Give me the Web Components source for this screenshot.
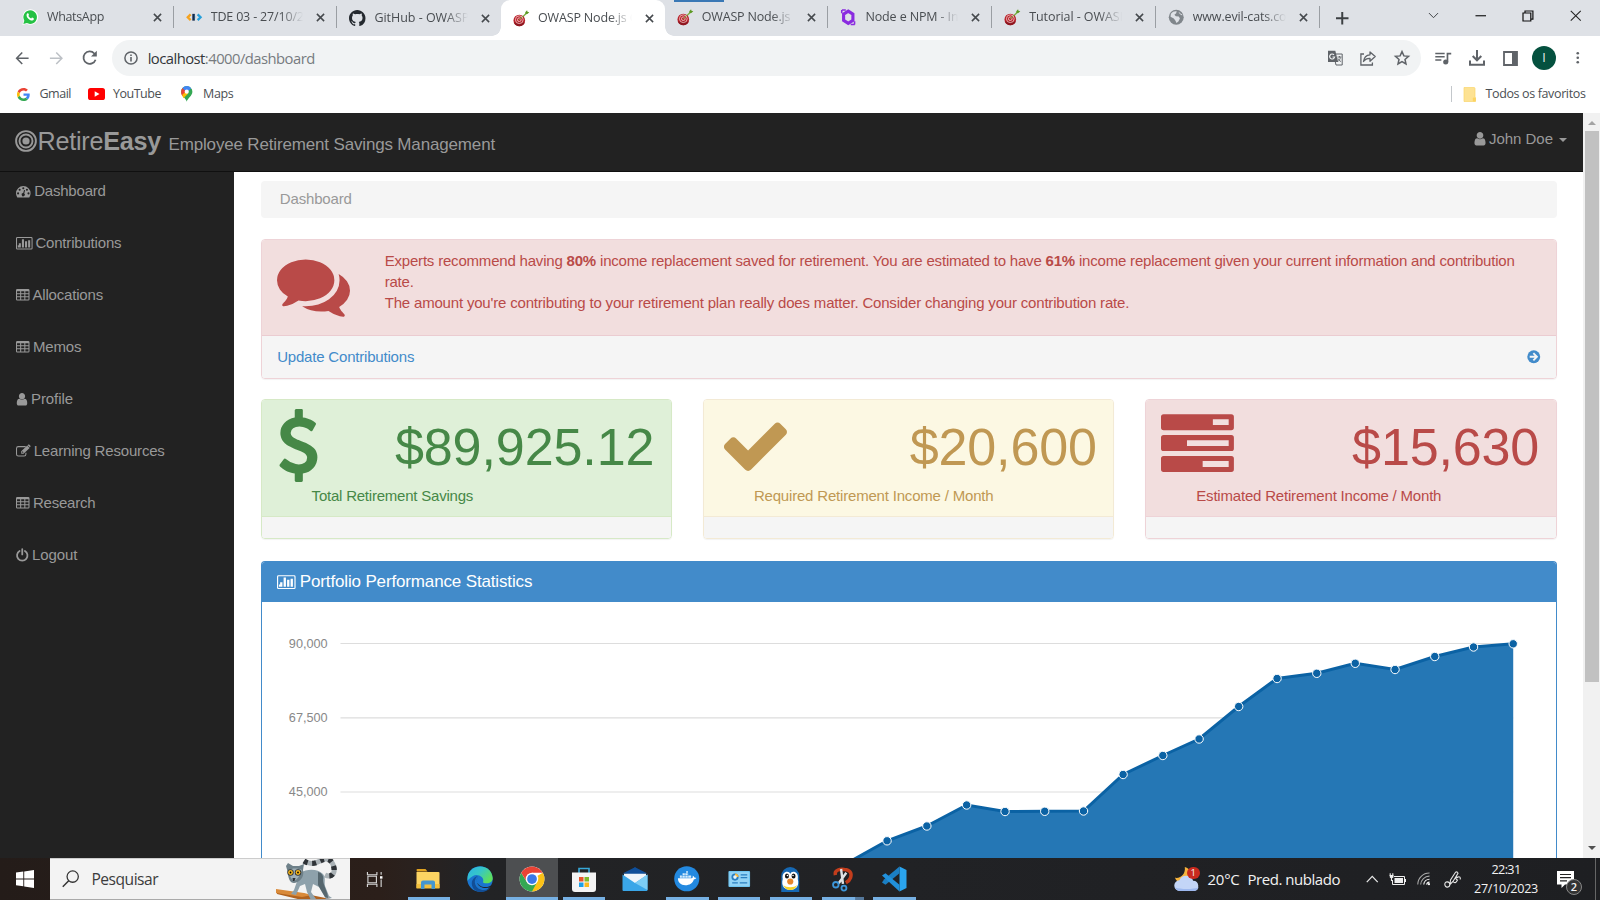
<!DOCTYPE html>
<html lang="pt-BR">
<head>
<meta charset="utf-8">
<title>OWASP Node.js Goat</title>
<style>
html,body{margin:0;height:100%;overflow:hidden;background:#fff}
body{font-family:"Liberation Sans",Arial,sans-serif}
</style>
</head>
<body>
<app-desktop></app-desktop>
<script>
const UI = '"Open Sans","Noto Sans",sans-serif';
const svg = (vb, body, extra = '') => `<svg viewBox="${vb}" ${extra}>${body}</svg>`;
const goat = svg('0 0 17 17', '<path d="M7.500 9.500l6-6" stroke="#7cb342" stroke-width="1.400"/><path d="M12.600 2.300l1.900-2 .4 1.600 1.900.300-2 2-1.900.300z" fill="#5d9a24"/><circle cx="6.500" cy="10.800" r="6" fill="#b7222b"/><path d="M.9 13a6 6 0 0 0 11.200 0z" fill="#8f1720"/><circle cx="6.500" cy="10" r="4" fill="none" stroke="#f0bcbc" stroke-width=".9"/><circle cx="6.500" cy="10" r="1.900" fill="none" stroke="#f3c9c9" stroke-width=".9"/><path d="M6.500 10l3.500-3.500" stroke="#7cb342" stroke-width="1"/>');
const chromeLogo = svg('0 0 48 48', '<circle cx="24" cy="24" r="23" fill="#fff"/><path d="M24 24L43.900 12.500A23 23 0 0 1 24 47z" fill="#fbc116"/><path d="M4.100 12.500A23 23 0 0 0 24 47L33.500 29.500 24 24 14.500 29.500z" fill="#34a853"/><path d="M4.100 12.500A23 23 0 0 1 43.900 12.500H24L14.500 29.500z" fill="#ea4335"/><circle cx="24" cy="24" r="11.500" fill="#fff"/><circle cx="24" cy="24" r="9" fill="#3b78e7"/>');
const I = {
 whatsapp: svg('0 0 17 17','<path d="M.4 16.500L1.700 12.200A8 8 0 1 1 4.800 15.300z" fill="#fff"/><path d="M1.400 15.500l1-3.500a7 7 0 1 1 2.600 2.500z" fill="#25c144"/><path d="M5.700 4.500c.6-.4 1 0 1.500 1.500.1.500-.5.800-.6 1.200.7 1.300 1.600 2 2.800 2.500.5-.2.800-1 1.200-.9l1.600.9c.3.500-.3 2-1.700 2.100C7.900 12 4.800 8.800 4.700 6.600c0-1 .4-1.800 1-2.100z" fill="#fff"/>'),
 tde: svg('0 0 17 17','<path d="M4.800 5.500L1.800 8.500l3 3" fill="none" stroke="#f5a31f" stroke-width="2.400"/><path d="M7.800 5v7" stroke="#142a4c" stroke-width="2.600"/><path d="M9.100 5.300v6.400q1-3.200 0-6.400z" fill="#26a0da"/><path d="M12 5.500l3 3-3 3" fill="none" stroke="#26a0da" stroke-width="2.400"/>'),
 github: svg('0 0 16 16','<path fill="#24292f" d="M8 0C3.580 0 0 3.580 0 8c0 3.540 2.290 6.530 5.470 7.590.4.070.550-.170.550-.380 0-.190-.010-.820-.010-1.490-2.010.370-2.530-.490-2.690-.940-.090-.230-.480-.940-.820-1.130-.280-.150-.680-.520-.010-.530.630-.010 1.080.580 1.230.820.720 1.210 1.870.870 2.330.660.070-.520.280-.870.510-1.070-1.780-.2-3.640-.890-3.640-3.950 0-.870.310-1.590.820-2.150-.080-.2-.360-1.020.080-2.120 0 0 .670-.210 2.200.820.640-.180 1.320-.270 2-.270s1.360.090 2 .270c1.530-1.040 2.200-.820 2.200-.820.440 1.100.160 1.920.080 2.120.510.560.820 1.270.820 2.150 0 3.070-1.870 3.750-3.650 3.950.290.250.540.730.540 1.480 0 1.070-.010 1.930-.010 2.200 0 .210.150.460.550.380A8 8 0 0 0 16 8c0-4.420-3.580-8-8-8z"/>'),
 goat,
 node: svg('0 0 17 17','<path d="M8.500 2.200l4.800 3.100v6.400l-4.800 3.100-4.800-3.100V5.300z" fill="none" stroke="#8a2be0" stroke-width="3.200"/><path d="M2 1h4M1.800 1v3.500M11 16h4.200M15 12.500V16" stroke="#8a2be0" stroke-width="1.600"/>'),
 globe: svg('0 0 17 17','<circle cx="8.500" cy="8.500" r="7.700" fill="#80868b"/><path d="M3 5c1.500-2.300 4-3 6-2.600l-.6 2L6.600 6l1.500 1.500 3 .2 1.200 2.100-1.600 3-2 1.700-1-2.500L6 9.700 2.600 8z" fill="#dee1e6"/><path d="M11.500 3.500l1.500 2 1.700.5" stroke="#dee1e6" fill="none"/>'),
 close: svg('0 0 10 10','<path d="M1 1l8 8M9 1L1 9" stroke="#45494d" stroke-width="1.700"/>'),
 plus: svg('0 0 12 12','<path d="M6 0v12M0 6h12" stroke="#3c4043" stroke-width="1.900"/>'),
 chev: svg('0 0 12 8','<path d="M.8 1.200L6 6.500l5.200-5.300" fill="none" stroke="#3c4043" stroke-width="1.100"/>'),
 min: svg('0 0 12 12','<path d="M.5 6h11" stroke="#111" stroke-width="1.200"/>'),
 restore: svg('0 0 12 12','<path d="M1 3h7.800v8H1zM3 3V1h7.900v8.200H8.800" fill="none" stroke="#111" stroke-width="1.200"/>'),
 winx: svg('0 0 12 12','<path d="M.8.8l10.400 10.400M11.200.8L.8 11.200" stroke="#222" stroke-width="1.100"/>'),
 back: svg('0 0 16 16','<path d="M15 8H2M8 1.700L1.800 8 8 14.300" fill="none" stroke="#5f6368" stroke-width="1.700"/>'),
 fwd: svg('0 0 16 16','<path d="M1 8h13M8 1.700L14.200 8 8 14.300" fill="none" stroke="#bdc1c6" stroke-width="1.700"/>'),
 reload: svg('0 0 16 16','<path d="M14 10A6.400 6.400 0 1 1 12.700 3.600L14 5" fill="none" stroke="#5f6368" stroke-width="1.800"/><path d="M15.300.8v6H9.300z" fill="#5f6368"/>'),
 info: svg('0 0 14 14','<circle cx="7" cy="7" r="6.100" fill="none" stroke="#5f6368" stroke-width="1.500"/><path d="M7 6v4.500M7 3.500v1.600" stroke="#5f6368" stroke-width="1.600"/>'),
 translate: svg('0 0 16 16','<path d="M6.500 4h8.700v11H9z" fill="#f1f3f4" stroke="#5f6368" stroke-width="1"/><path d="M1 .8h7.300L11.200 12H1z" fill="#5f6368"/><path d="M7 4.800A2.500 2.500 0 1 0 7.600 7H5.500" fill="none" stroke="#f1f3f4" stroke-width="1.200"/><path d="M10.500 7h4M12.500 6v1.500M13.500 7.500c-.5 2-1.500 3-2.500 4M11 8.500c.6 1.500 1.600 2.500 3 3" stroke="#5f6368" stroke-width=".9" fill="none"/>'),
 share: svg('0 0 16 16','<path d="M4 4H.9v11h11.500V12.500" fill="none" stroke="#5f6368" stroke-width="1.300"/><path d="M3.500 11.500C4 7.500 6 5 10 4.800V1.900l5.200 4.700-5.200 4.600V8.300C7 8.200 5 9.300 3.500 11.500z" fill="none" stroke="#5f6368" stroke-width="1.300" stroke-linejoin="round"/>'),
 star: svg('0 0 16 16','<path d="M8 1.600l1.900 4.300 4.600.4-3.500 3.100 1 4.600-4-2.400-4 2.400 1-4.600L1.500 6.300l4.600-.4z" fill="none" stroke="#5f6368" stroke-width="1.500"/>'),
 music: svg('0 0 17 16','<path d="M0 2.600h10M0 6.100h10M0 9.600h6.500" stroke="#5f6368" stroke-width="1.700"/><path d="M13 12V2.800h4" stroke="#5f6368" stroke-width="1.800" fill="none"/><circle cx="11.100" cy="11.800" r="2.700" fill="#5f6368"/>'),
 download: svg('0 0 16 16','<path d="M8 0v10M3.700 6L8 10.300 12.300 6M1 10.500v4.300h14v-4.300" fill="none" stroke="#5f6368" stroke-width="2"/>'),
 panel: svg('0 0 15 15','<path d="M1 1h13v13H1z" fill="none" stroke="#5f6368" stroke-width="1.800"/><path d="M9 1h5v13H9z" fill="#5f6368"/>'),
 dots: svg('0 0 4 14','<circle cx="2" cy="1.800" r="1.500" fill="#5f6368"/><circle cx="2" cy="7" r="1.500" fill="#5f6368"/><circle cx="2" cy="12.200" r="1.500" fill="#5f6368"/>'),
 google: svg('0 0 48 48','<path fill="#EA4335" d="M24 9.500c3.540 0 6.710 1.220 9.210 3.600l6.850-6.850C35.900 2.380 30.470 0 24 0 14.620 0 6.510 5.380 2.560 13.220l7.980 6.190C12.430 13.720 17.740 9.500 24 9.500z"/><path fill="#4285F4" d="M46.980 24.550c0-1.570-.150-3.090-.380-4.550H24v9.020h12.940c-.580 2.960-2.260 5.480-4.780 7.180l7.730 6c4.510-4.180 7.090-10.360 7.090-17.650z"/><path fill="#FBBC05" d="M10.530 28.590c-.480-1.450-.760-2.990-.760-4.590s.270-3.140.760-4.590l-7.980-6.190C.920 16.460 0 20.120 0 24c0 3.880.920 7.540 2.560 10.780l7.970-6.190z"/><path fill="#34A853" d="M24 48c6.480 0 11.930-2.130 15.890-5.810l-7.730-6c-2.150 1.450-4.920 2.300-8.160 2.300-6.260 0-11.570-4.220-13.470-9.910l-7.980 6.190C6.510 42.620 14.620 48 24 48z"/>'),
 youtube: svg('0 0 17 12','<rect width="17" height="12" rx="2.600" fill="#f00"/><path d="M6.700 3.300L11.500 6 6.700 8.700z" fill="#fff"/>'),
 maps: svg('0 0 12 17','<path d="M6 16.800C5.500 13 0 10.500 0 6a6 6 0 0 1 12 0c0 4.500-5.500 7-6 10.800z" fill="#34a853"/><path d="M1.500 2.100L6 6l-4.700 5A8 8 0 0 1 0 6a6 6 0 0 1 1.500-3.900z" fill="#ea4335"/><path d="M1 9.500L6 5l1.500 3-5 5z" fill="#fbbc04"/><path d="M1.500 2.100A6 6 0 0 1 10.700 2.300L6 7z" fill="#4285f4"/><circle cx="6" cy="6" r="2.200" fill="#fff"/>'),
 folder: svg('0 0 13 15','<path d="M1 .5h10a1 1 0 0 1 1 1v8.500l.5.700v3.800H1z" fill="#fde293" stroke="#f9d66b" stroke-width=".7"/><rect x="9.800" y="10.500" width="3" height="4" rx="1" fill="#fcd462"/>'),
 bullseye: svg('0 0 22 22','<g fill="none" stroke="#999"><circle cx="11" cy="11" r="9.900" stroke-width="1.900"/><circle cx="11" cy="11" r="6.500" stroke-width="1.900"/></g><circle cx="11" cy="11" r="3.600" fill="#999"/>'),
 dash: svg('0 0 1792 1792','<path fill="currentColor" fill-rule="evenodd" d="M0 1150a896 896 0 0 1 1792 0q0 260-140 480-20 30-54 30H194q-34 0-54-30Q0 1410 0 1150zM256 1024a128 128 0 1 0 0 256 128 128 0 1 0 0-256zM448 576a128 128 0 1 0 0 256 128 128 0 1 0 0-256zM896 384a128 128 0 1 0 0 256 128 128 0 1 0 0-256zM1344 576a128 128 0 1 0 0 256 128 128 0 1 0 0-256zM1536 1024a128 128 0 1 0 0 256 128 128 0 1 0 0-256zM990 740l-100 380a192 192 0 1 0 120 40l105-385z"/>'),
 chart: svg('0 0 2048 1792','<path fill="currentColor" d="M640 896v512H384V896zm384-512v1024H768V384zm384 256v768h-256V640zm384-128v896h-256V512zM384 1150v258H256v-258z" transform="translate(-40 0)"/><rect x="64" y="192" width="1920" height="1408" rx="100" fill="none" stroke="currentColor" stroke-width="128"/>'),
 table: svg('0 0 1664 1792','<path fill="currentColor" fill-rule="evenodd" d="M160 128h1344a160 160 0 0 1 160 160v1088a160 160 0 0 1-160 160H160A160 160 0 0 1 0 1376V288A160 160 0 0 1 160 128zM128 384v256h384V384zM640 384v256h384V384zM1152 384v256h384V384zM128 768v256h384V768zM640 768v256h384V768zM1152 768v256h384V768zM128 1152v256h384v-256zM640 1152v256h384v-256zM1152 1152v256h384v-256z"/>'),
 user: svg('256 0 1280 1792','<path fill="currentColor" d="M1536 1399q0 109-62.500 187t-150.500 78h-854q-88 0-150.500-78t-62.500-187q0-85 8.500-160.500t31.500-152 58.500-131 94-89 134.500-34.500q131 128 313 128t313-128q76 0 134.500 34.500t94 89 58.500 131 31.500 152 8.500 160.500zm-256-887q0 159-112.500 271.500t-271.500 112.500-271.500-112.500-112.500-271.500 112.500-271.500 271.500-112.500 271.500 112.500 112.500 271.500z"/>'),
 edit: svg('0 0 1792 1792','<path fill="none" stroke="currentColor" stroke-width="128" d="M1190 320H290Q64 320 64 546v700q0 226 226 226h700q226 0 226-226v-170"/><path fill="currentColor" fill-rule="evenodd" d="M640 896l740-700 290 290-740 700H640zM760 950v110h100l60-60-110-110zM1510 70q50-40 100 0l160 160q40 50 0 100l-80 80-260-260z"/>'),
 power: svg('0 0 1536 1792','<path fill="none" stroke="currentColor" stroke-width="220" stroke-linecap="round" d="M440 370A640 640 0 1 0 1096 370M768 150v640"/>'),
 comments: svg('0 0 1792 1792','<path fill="currentColor" d="M1408 768q0 139-94 257t-256.500 186.500-353.500 68.500q-86 0-176-16-124 88-278 128-36 9-86 16h-3q-11 0-20.500-8t-11.500-21q-1-3-1-6.500t.5-6.500 2-6l2.500-5 3.500-5.500 4-5 4.500-5 4-4.500q5-6 23-25t26-29.500 22.500-29 25-38.500 20.500-44q-124-72-195-177t-71-224q0-139 94-257t256.500-186.500 353.500-68.500 353.500 68.500 256.500 186.500 94 257zm384 256q0 120-71 224.500t-195 176.500q10 24 20.500 44t25 38.500 22.500 29 26 29.500 23 25q1 1 4 4.500t4.500 5 4 5 3.500 5.500l2.500 5 2 6 .5 6.500-1 6.500q-3 14-13 22t-22 7q-50-7-86-16-154-40-278-128-90 16-176 16-271 0-472-132 58 4 88 4 161 0 309-45t264-129q125-92 192-212t67-254q0-77-23-152 129 71 204 178t75 230z"/>'),
 dollar: svg('0 0 1792 1792','<path fill="currentColor" d="M1362 1185q0 153-99.500 263.500t-258.500 136.500v175q0 14-9 23t-23 9h-135q-13 0-22.500-9.500t-9.500-22.500v-175q-66-9-127.500-31t-101.500-44.500-74-48-46.500-37.500-17.500-18q-17-21-2-41l103-135q7-10 23-12 15-2 24 9l2 2q113 99 243 125 37 8 74 8 81 0 142.500-43t61.500-122q0-28-15-53t-33.500-42-58.500-37.500-66-32-80-32.500q-39-16-61.500-25t-61.500-26.500-62.500-31-56.500-35.500-53.500-42.500-43.500-49-35.500-58-21-66.500-8.500-78q0-138 98-242t255-134v-180q0-13 9.500-22.500t22.500-9.500h135q14 0 23 9t9 23v176q57 6 110.500 23t87 33.500 63.500 37.500 39 29 15 14q17 18 5 38l-81 146q-8 15-23 16-14 3-27-7-3-3-14.500-12t-39-26.500-58.500-32-74.500-26-85.500-11.500q-95 0-155 43t-60 111q0 26 8.500 48t29.500 41.500 39.500 33 56 31 60.500 27 70 27.500q53 20 81 31.500t76 35 75.500 42.500 62 50 53 63.500 31.500 76.500 13 94z"/>'),
 check: svg('0 0 1792 1792','<path fill="currentColor" d="M1671 566q0 40-28 68l-724 724-136 136q-28 28-68 28t-68-28l-136-136-362-362q-28-28-28-68t28-68l136-136q28-28 68-28t68 28l294 295 656-657q28-28 68-28t68 28l136 136q28 28 28 68z"/>'),
 tasks: svg('0 0 1792 1792','<path fill="currentColor" fill-rule="evenodd" d="M64 128h1664a64 64 0 0 1 64 64v264a64 64 0 0 1-64 64H64A64 64 0 0 1 0 456V192a64 64 0 0 1 64-64zM1275 252v142h389V252zM64 642h1664a64 64 0 0 1 64 64v264a64 64 0 0 1-64 64H64a64 64 0 0 1-64-64V706a64 64 0 0 1 64-64zM640 767v142h1024V767zM64 1156h1664a64 64 0 0 1 64 64v264a64 64 0 0 1-64 64H64a64 64 0 0 1-64-64v-264a64 64 0 0 1 64-64zM1024 1281v142h640v-142z"/>'),
 circright: svg('0 0 14 14','<circle cx="7" cy="7" r="6.700" fill="#428bca"/><path d="M2.800 7h7M6.600 3.300L10.300 7l-3.700 3.700" fill="none" stroke="#f5f5f5" stroke-width="1.900"/>'),
 caret: svg('0 0 8 4','<path d="M0 0h8L4 4z" fill="#999"/>'),
 win: svg('0 0 18 18','<path d="M0 2.600l7.300-1v6.900H0zM8.200 1.500L18 0v8.500H8.200zM0 9.400h7.300v6.900L0 15.300zM8.200 9.400H18V18l-9.800-1.500z" fill="#fff"/>'),
 mag: svg('0 0 18 18','<circle cx="11" cy="6.800" r="5.800" fill="none" stroke="#333" stroke-width="1.300"/><path d="M6.900 11L.8 17.200" stroke="#333" stroke-width="1.500"/>'),
 lemur: svg('0 0 64 42','<path d="M28 3C36 8 42 4 46 2c7-3 11 2 12 8s-3 10-9 7" fill="none" stroke="#aab2b6" stroke-width="5"/><path d="M28 3C36 8 42 4 46 2c7-3 11 2 12 8s-3 10-9 7" fill="none" stroke="#2e3236" stroke-width="5.300" stroke-dasharray="4 4.500"/><path d="M0 32l30 4 34 7H30L1 36z" fill="#b0621f"/><path d="M0 31l28 4 8 2-10 2L0 35z" fill="#d98a3a"/><path d="M24 15c8-5 18-4 23 1 3 4 1 8 2 12l4 10 3 2-6 1-7-12-6-3-2 8 5 7-5 1-4-8-2-8-5 2-4 9-5-1 3-4z" fill="#8ea1ab"/><path d="M42 14c4 1 6 4 5 8 0 5 5 12 5 18l-3-1-7-12z" fill="#56676f"/><path d="M10 8l2-3 5 3h6l5-2-1 6c2 8-5 13-9 13s-6-5-6-10z" fill="#6e8089"/><path d="M13 12c3-2 9-2 13 0-2 5-4 9-8 11-3-2-5-6-5-11z" fill="#9fb0b8"/><circle cx="14.500" cy="14.500" r="3.200" fill="#2e3236"/><circle cx="22" cy="14.500" r="3.200" fill="#2e3236"/><circle cx="14.500" cy="14.500" r="2.400" fill="#f7b71c"/><circle cx="22" cy="14.500" r="2.400" fill="#f7b71c"/><circle cx="14.500" cy="14.500" r=".9"/><circle cx="22" cy="14.500" r=".9"/><path d="M16.500 20h3l-1 3h-1.500z" fill="#2e3236"/>'),
 taskview: svg('0 0 18 18','<path d="M1 1v3h10V1M1 17v-3h10v3M1.500 5.500h9v7h-9zM15.500 1v3M15.500 9v8" fill="none" stroke="#d5d5d5" stroke-width="1.200"/><path d="M14.300 5.500h2.600v2.600h-2.600z" fill="#fff"/>'),
 explorer: svg('0 0 24 22','<path d="M.5 2a1 1 0 0 1 1-1h8l2 2.500H1z" fill="#e0a220"/><path d="M.5 4h22a1 1 0 0 1 1 1v15H.5z" fill="#fcd462"/><path d="M.5 16h23v4.500H.5z" fill="#f4c03c"/><path d="M5 21v-6.500q0-2 2-2h10q2 0 2 2V21h-3.500v-4.500h-7V21z" fill="#4496cf"/>'),
 edge: svg('0 0 26 26','<defs><linearGradient id="a" x1="0" y1="0" x2="1" y2=".6"><stop offset="0" stop-color="#2bb3e6"/><stop offset=".5" stop-color="#36c6c8"/><stop offset="1" stop-color="#5fe05a"/></linearGradient></defs><circle cx="13" cy="13" r="12.700" fill="#1a75cf"/><path d="M.6 11C2-2 24-4 25.700 12c.3 5-5.700 6.500-9.700 4.500 2-6-6-9-10-6.500C2.500 12 1 14 .4 15z" fill="url(#a)"/><path d="M11 10c-6 4-3 14 6 14 3 0 5-1 7-3-5 7-15 6-18 1-3-6 0-11 5-12z" fill="#124e96"/><path d="M11 10.500c-2 3-1.500 8 3.500 10 4 1.300 8 .5 10.500-2l-1.200 2.500c-5 2-12 1-13.500-4-.8-3-.5-5 .7-6.500z" fill="#222326"/>'),
 chrome: chromeLogo,
 store: svg('0 0 24 25','<path d="M7 6V1.500h10V6" fill="none" stroke="#37a8d8" stroke-width="1.600"/><path d="M0 5.500h24V22a3 3 0 0 1-3 3H3a3 3 0 0 1-3-3z" fill="#f4f4f4"/><path d="M7 10h4.500v4.500H7z" fill="#e8532a"/><path d="M12.500 10H17v4.500h-4.500z" fill="#7fb92b"/><path d="M7 15.500h4.500V20H7z" fill="#1ba0e8"/><path d="M12.500 15.500H17V20h-4.500z" fill="#fbb91c"/>'),
 mail: svg('0 0 26 24','<path d="M.5 9.500L13 .3l12.500 9.200-12.500 7z" fill="#0f4f9a"/><path d="M2 6.500h22v4L13 18 2 10.500z" fill="#eef5fb" /><path d="M.5 6.500L13 .3l12.500 6.200z" fill="#0f4f9a"/><path d="M.5 7.500L13 16l12.500-8.500V23a1 1 0 0 1-1 1h-23a1 1 0 0 1-1-1z" fill="#3aa6e8"/><path d="M13 16l12.500-8.500V23z" fill="#7ccdf5"/>'),
 docker: svg('0 0 26 26','<circle cx="13" cy="13" r="12.800" fill="#2389e0"/><path d="M4 12.500h14c1 0 1.500-1 1-2.600 1 .3 1.600 1 1.800 1.700 1 0 1.700.2 2 .6-.6 1-1.600 1.200-2.500 1.200C19 17.500 16 19.500 11.500 19.500 7 19.500 4 17 4 12.500z" fill="#fff"/><path d="M6 9.700h11.500v2.200H6zM8.500 7.300h6v2h-6zM12.300 5.300h2v1.700h-2z" fill="#d7ecfb"/><path d="M8.400 7v5M11.300 7v5M14.200 7v5" stroke="#2389e0" stroke-width=".5"/>'),
 card: svg('0 0 23 17','<rect width="23" height="17" rx="1" fill="#6fc6f2"/><rect x="1.200" y="1.200" width="20.600" height="14.600" fill="#93d3f5"/><circle cx="7" cy="6.500" r="3.800" fill="#2a7fc0"/><path d="M7 6.500V2.700a3.800 3.800 0 0 1 3.800 3.800z" fill="#f4b63c"/><circle cx="7" cy="6.500" r="1.900" fill="#e7f5fc"/><path d="M13 4h7M13 7h7M4 12.500h6M12 12.500h8" stroke="#2a7fc0" stroke-width="1.300"/>'),
 penguin: svg('0 0 18 25','<path d="M0 25V9a9 9 0 0 1 18 0v16z" fill="#1668b3"/><path d="M1.500 12C0 4 8 3 9 7c1-4 9-3 7.500 5 2 7-2 11-7.500 11s-9.500-4-7.500-11z" fill="#fff"/><path d="M2 18c3 3 11 3 14 0-1 3-4 5-7 5s-6-2-7-5z" fill="#f4d42a"/><ellipse cx="5.700" cy="9" rx="2" ry="2.600" fill="#111"/><ellipse cx="12.300" cy="9" rx="2" ry="2.600" fill="#111"/><circle cx="6.200" cy="8.500" r=".8" fill="#fff"/><circle cx="11.800" cy="8.500" r=".8" fill="#fff"/><circle cx="9" cy="14.500" r="3.100" fill="#e8862a"/>'),
 snip: svg('0 0 22 25','<path d="M3.500 8C2 2 9 1.500 13 2c6 .5 8 4 6.500 8.500-.8 2.500-2.500 4-5 5.500" fill="none" stroke="#c33d1c" stroke-width="3.600"/><path d="M9.500 1.500l2 15.500M15 5.500L7 16.500" stroke="#dfe3e6" stroke-width="2.500"/><circle cx="4" cy="18" r="2.900" fill="none" stroke="#3d96d9" stroke-width="1.900"/><circle cx="12.500" cy="21.500" r="2.600" fill="none" stroke="#3d96d9" stroke-width="1.900"/>'),
 vscode: svg('0 0 26 26','<path d="M18.500.5L25.500 4v18l-7 3.500z" fill="#2aa4ee"/><path d="M18.500.5v6.800L4.500 18.700 1 16.500l2.200-3.300z" fill="#1b7fc4"/><path d="M18.500 25.500v-6.800L4.500 7.300 1 9.500 18.500 25.500z" fill="#2191dc"/>'),
 weather: svg('0 0 26 25','<path d="M11 0a8.500 8.500 0 1 1-10 11C7 12 12 7 11 0z" fill="#f5b33c"/><path d="M6 24.500a5.500 5.500 0 0 1-.5-11 7.500 7.500 0 0 1 14 .5 5.300 5.300 0 0 1 1 10.500z" fill="#c3d5f7"/><path d="M6 24.500a5.500 5.500 0 0 1-5-3.500c6 2 18 2 24 0a5.300 5.300 0 0 1-4.500 3.500z" fill="#9db8ee"/>'),
 up: svg('0 0 13 8','<path d="M.8 7.200L6.500 1.300l5.700 5.900" fill="none" stroke="#e8e8e8" stroke-width="1.300"/>'),
 battery: svg('0 0 17 12','<path d="M5 3.500h10.500v8H3.500V7" fill="none" stroke="#eee" stroke-width="1"/><path d="M5.500 5h8.500v5H5.500z" fill="#eee"/><path d="M16 6h1v3h-1z" fill="#eee"/><path d="M.5 2.500h4M1.200.3v2.400M3.800.3v2.400M2.500 5v3" stroke="#eee" stroke-width="1.100"/><path d="M.8 2.500h3.600v2L2.500 5.600.8 4.500z" fill="#eee"/>'),
 wifi: svg('0 0 14 14','<g fill="none" stroke="#aaa" stroke-width="1.100"><path d="M.8 13A12 12 0 0 1 13 1"/><path d="M3.800 13A9 9 0 0 1 13 4.300"/></g><path d="M7 13a6 6 0 0 1 6-5.500M10 13a3 3 0 0 1 3-2.500" fill="none" stroke="#eee" stroke-width="1.200"/><circle cx="12.400" cy="12.600" r="1.100" fill="#fff"/>'),
 pen: svg('0 0 17 17','<path d="M6 13.500l.5-4.500L11.500 1.300q2-1.300 2.500 1L9 10.500zM.8 13.500c0-4 5-3 5 0s-4.500 4-5 0zM9 10.500c2 2.500 3.500.5 4.500-1.500-3-1-1-4 0-2.500 2-2 3.500.5 2.500 2" fill="none" stroke="#e6e6e6" stroke-width="1.100"/>'),
 notif: svg('0 0 17 17','<path d="M0 0h17v13.500H8L4.500 17v-3.500H0z" fill="#fff"/><path d="M3 3.500h11M3 6.700h11M3 9.900h7" stroke="#222" stroke-width="1.200"/>'),
};

/* Registers an element whose open shadow root is stamped from a markup function. */
const def = (name, css, html) => customElements.define(name, class extends HTMLElement {
  constructor(){ super(); this.attachShadow({mode:'open'}); }
  connectedCallback(){
    const t = document.createElement('template');
    t.innerHTML = `<style>${css}</style>${html((k, d = '') => this.getAttribute(k) ?? d)}`;
    this.shadowRoot.replaceChildren(t.content.cloneNode(true));
  }
});

/* <ui-icon name w h> */
def('ui-icon', ':host{display:inline-block;flex:none;line-height:0}svg{display:block;width:100%;height:100%;overflow:visible}',
  a => `<style>:host{width:${a('w',16)}px;height:${a('h',a('w',16))}px}</style>${I[a('name')]}`);

def('browser-tab', `:host{display:flex;align-items:center;width:163.700px;height:36px;box-sizing:border-box;padding:0 12px 0 12px;position:relative;font:12.500px/18px ${UI};color:#494d51}
  .t{flex:1;margin-left:8.500px;overflow:hidden;white-space:nowrap;margin-right:11px;-webkit-mask:linear-gradient(90deg,#000 74%,transparent 98%);mask:linear-gradient(90deg,#000 74%,transparent 98%)}
  ui-icon:last-of-type{margin-right:-1px}
  :host([sep]){border-right:1px solid #9a9ea3;height:22px;margin:6px 0 8px}
  :host([active]){background:#fff;border-radius:9px 9px 0 0;z-index:1}
  :host([active])::before,:host([active])::after{content:"";position:absolute;bottom:0;width:9px;height:9px}
  :host([active])::before{left:-9px;background:radial-gradient(circle at 0 0,transparent 8.500px,#fff 9px)}
  :host([active])::after{right:-9px;background:radial-gradient(circle at 100% 0,transparent 8.500px,#fff 9px)}`,
  a => `<ui-icon name="${a('icon')}" w="16.500"></ui-icon><span class="t"><fit-text w="${a('w')}"><slot></slot></fit-text></span><ui-icon name="close" w="9"></ui-icon>`);

def('side-item', ':host{display:flex;align-items:center;height:52.080px;padding-left:15.600px;font-size:15px;line-height:20.800px;color:#999}span{margin-left:var(--g,4px)}',
  a => `<ui-icon name="${a('icon')}" w="${a('iw')}" h="14.600"></ui-icon><span><fit-text w="${a('w')}"><slot></slot></fit-text></span>`);

def('stat-card', `:host{display:flex;flex-direction:column;border:1px solid var(--bd);border-radius:4px;height:140px;box-sizing:border-box;box-shadow:0 1px 1px rgba(0,0,0,.05);overflow:hidden;color:var(--fg)}
  .top{height:117px;background:var(--bg);border-bottom:1.500px solid var(--bd);box-sizing:border-box;padding-top:9px}
  .r{display:flex;justify-content:space-between;padding-right:16.500px;height:73px}
  .v{font-size:52.080px;line-height:76px}
  .l{font-size:15px;line-height:21px;margin:2.500px 0 0 50px}
  .f{flex:1;background:#f5f5f5}`,
  a => `<div class="top"><div class="r"><ui-icon name="${a('icon')}" w="72.900" style="margin-left:${a('ix')}px"></ui-icon><fit-text class="v" w="${a('vw')}">${a('value')}</fit-text></div><div class="l"><fit-text w="${a('lw')}"><slot></slot></fit-text></div></div><div class="f"></div>`);

def('alert-panel', `:host{display:block;border:1px solid #eed3d7;border-radius:4px;box-sizing:border-box;height:139.500px;overflow:hidden;box-shadow:0 1px 1px rgba(0,0,0,.05)}
  .b{display:flex;background:#f2dede;color:#b94a48;height:96px;box-sizing:border-box;padding:9px 0 0 15.600px;border-bottom:1.500px solid #ebccd1}
  .t{margin-left:34.500px;font-size:15px;line-height:20.830px;padding-top:2px}
  .f{display:flex;align-items:center;justify-content:space-between;background:#f5f5f5;height:41px;padding:0 15.500px 2px 15.600px;color:#428bca;font-size:15px;line-height:21px}`,
  a => `<div class="b"><ui-icon name="comments" w="73"></ui-icon><div class="t"><slot></slot></div></div><div class="f"><slot name="action"></slot><ui-icon name="circright" w="13.500"></ui-icon></div>`);

const PTS = [[847,863],[886.700,840.800],[926.500,826],[966.300,805],[1004.700,811.500],[1044.400,811.300],[1083.200,811],[1122.800,774.500],[1162.500,755.500],[1198.800,739],[1238.400,706.500],[1276.800,678.500],[1316.500,673.300],[1355,663.300],[1394.800,669.500],[1434.500,656.500],[1473.300,647],[1513,643.800]];
def('performance-chart', `:host{display:block;border:1px solid #428bca;border-bottom:0;border-radius:4px 4px 0 0;overflow:hidden}
  .h{display:flex;align-items:center;background:#428bca;color:#fff;height:40.600px;padding-left:15.600px;gap:4px;font-size:17px;line-height:20px}
  svg{display:block;width:100%;height:256px} text{font:12.700px "Liberation Sans",Arial,sans-serif;fill:#888}`,
  a => `<div class="h"><ui-icon name="chart" w="18.600" h="16.300"></ui-icon><fit-text w="232.500"><slot></slot></fit-text></div>
  <svg viewBox="261.500 602 1294.300 256" preserveAspectRatio="none"><g stroke="#ddd" stroke-width="1.200"><path d="M340 643.500h1173M340 717.800h1173M340 792h1173"/></g>
  ${[['90,000',643.5],['67,500',717.8],['45,000',792]].map(([t,y])=>`<text x="327.200" y="${y+4.500}" text-anchor="end">${t}</text>`).join('')}
  <path d="M${PTS.join('L')}V870H847z" fill="#2577b5"/><path d="M${PTS.join('L')}" fill="none" stroke="#0b62a4" stroke-width="3"/>
  ${PTS.map(([x,y])=>`<circle cx="${x}" cy="${y}" r="4.200" fill="#0b62a4" stroke="#fff" stroke-width="1"/>`).join('')}</svg>`);

def('task-item', `:host{display:flex;flex:none;width:51.750px;height:42px;align-items:center;justify-content:center;position:relative}
  :host([run])::after{content:"";position:absolute;left:5px;right:4.500px;bottom:0;height:3px;background:#76b0e3}
  :host([active]){background:#4d4f51}:host([active])::after{left:0;right:0}
  :host([multi])::after{background:linear-gradient(90deg,#76b0e3 78%,#55789b 80%)}`,
  a => `<ui-icon name="${a('icon')}" w="${a('w')}" h="${a('h')}"></ui-icon>`);

def('browser-chrome', `:host{display:block;height:113px;background:#fff;box-sizing:border-box;font-family:${UI};color:#4b4f53}
  .tabs{display:flex;height:36px;background:#dee1e6;padding-left:10px;position:relative}
  .load{position:absolute;left:674px;top:0;width:50px;height:1.500px;background:#3a78b5}
  .new{align-self:center;margin-left:16.500px}
  .win{margin-left:auto;display:flex;height:31px;align-items:center}.win span{width:47.700px;display:flex;justify-content:center}
  .bar{display:flex;height:44px;align-items:center;padding-left:6px}
  .b{width:33.400px;display:flex;justify-content:center;flex:none}
  .omni{flex:1;margin:0 6.500px 0 6px;background:#f1f3f4;border-radius:18px;height:36px;display:flex;align-items:center;padding:0 2px 0 12px;font-size:14.800px;line-height:20px;color:#777b80}
  .omni b{font-weight:400;color:#33363a}.omni .g{flex:1;margin-left:9.500px}
  .av{width:24px;height:24px;border-radius:50%;background:#05513f;color:#e6efec;font-size:12.500px;line-height:24px;text-align:center}
  .bm{display:flex;height:28px;align-items:center;padding-left:16.500px;font-size:12.500px;line-height:18px}
  .bm>ui-icon+fit-text{margin-right:16.500px}
  .sp{margin-left:auto;width:1px;height:16px;background:#c3c7cb;margin-right:11px}`,
  () => `<div class="tabs"><browser-tab icon="whatsapp" sep w="57">WhatsApp</browser-tab><browser-tab icon="tde" sep w="114">TDE 03 - 27/10/2023</browser-tab><browser-tab icon="github" w="131">GitHub - OWASP/Node</browser-tab><browser-tab icon="goat" active w="119">OWASP Node.js Goat</browser-tab><browser-tab icon="goat" sep w="119">OWASP Node.js Goat</browser-tab><browser-tab icon="node" sep w="113">Node e NPM - Instal</browser-tab><browser-tab icon="goat" sep w="118">Tutorial - OWASP No</browser-tab><browser-tab icon="globe" sep w="105">www.evil-cats.com</browser-tab><ui-icon class="new" name="plus" w="12.500"></ui-icon><i class="load"></i>
  <div class="win"><span><ui-icon name="chev" w="11" h="7"></ui-icon></span><span><ui-icon name="min" w="11.500"></ui-icon></span><span><ui-icon name="restore" w="12"></ui-icon></span><span><ui-icon name="winx" w="11.500"></ui-icon></span></div></div>
  <div class="bar"><span class="b"><ui-icon name="back" w="14.500"></ui-icon></span><span class="b"><ui-icon name="fwd" w="14.500"></ui-icon></span><span class="b"><ui-icon name="reload" w="15.500"></ui-icon></span>
  <div class="omni"><ui-icon name="info" w="14"></ui-icon><span class="g"><fit-text w="167"><b>localhost</b>:4000/dashboard</fit-text></span><span class="b"><ui-icon name="translate" w="16"></ui-icon></span><span class="b"><ui-icon name="share" w="16"></ui-icon></span><span class="b"><ui-icon name="star" w="16"></ui-icon></span></div>
  <span class="b"><ui-icon name="music" w="16.500" h="15"></ui-icon></span><span class="b"><ui-icon name="download" w="16"></ui-icon></span><span class="b"><ui-icon name="panel" w="15"></ui-icon></span><span class="b"><span class="av">I</span></span><span class="b"><ui-icon name="dots" w="3.500" h="13.500"></ui-icon></span><span style="width:6px"></span></div>
  <div class="bm"><ui-icon name="google" w="13"></ui-icon><fit-text w="31.500" style="margin-left:10px">Gmail</fit-text><ui-icon name="youtube" w="17" h="12"></ui-icon><fit-text w="48" style="margin-left:8.500px;margin-right:20px">YouTube</fit-text><ui-icon name="maps" w="11.500" h="16"></ui-icon><fit-text w="30.500" style="margin-left:10.500px">Maps</fit-text><i class="sp"></i><ui-icon name="folder" w="13" h="15"></ui-icon><fit-text w="100" style="margin:0 14.500px 0 9.500px">Todos os favoritos</fit-text></div>`);

def('site-header', `:host{display:flex;height:58.500px;box-sizing:border-box;border-bottom:1px solid #101010;background:#222;color:#999;padding:0 16px 0 15.200px;justify-content:space-between}
  .l{display:flex;align-items:baseline;padding-top:13px}.l ui-icon{align-self:flex-start;margin:4px .3px 0 0}
  .n{font-size:25.200px;line-height:30px}.s{font-size:17px;line-height:30px;margin-left:7.500px}
  .u{display:flex;align-items:center;height:52px;font-size:15px;line-height:20px}.u fit-text{margin:0 6px 0 3.500px}`,
  () => `<div class="l"><ui-icon name="bullseye" w="22"></ui-icon><fit-text class="n" w="123.500">Retire<b>Easy</b></fit-text><fit-text class="s" w="326.500">Employee Retirement Savings Management</fit-text></div>
  <div class="u"><ui-icon name="user" w="12" h="15.500" style="margin-top:-1px"></ui-icon><fit-text w="64">John Doe</fit-text><ui-icon name="caret" w="8" h="4" style="margin-top:2px"></ui-icon></div>`);

def('scroll-bar', ':host{display:flex;flex-direction:column;align-items:center;width:17px;background:#f1f1f1;flex:none}i{width:14px;height:550.500px;background:#c1c1c1}.a{width:0;border:4px solid transparent}.up{border-bottom-color:#a3a3a3;border-top:0;margin:8px 0 6px}.dn{border-top-color:#505050;border-bottom:0;margin-top:auto;margin-bottom:8px}',
  () => '<span class="a up"></span><i></i><span class="a dn"></span>');

def('task-bar', `:host{display:flex;height:42px;background:linear-gradient(90deg,#241c19 0,#2b1f1a 380px,#2a211e 410px,#222325 470px,#212225 900px,#1e1f22);font-family:${UI};color:#f2f2f2;position:relative;box-sizing:border-box}
  .c{display:flex;align-items:center;justify-content:center;flex:none}
  .s{width:300px;background:#f3f3f3;display:flex;align-items:center;padding-left:12px;box-sizing:border-box;flex:none;border-bottom:1px solid #aaa;border-top:1px solid #ccc;color:#3c3c3c;font-size:15.600px;line-height:22px;overflow:hidden}
  .s fit-text{margin-left:12px}.s .lem{margin:0 10px 0 auto}
  .tray{margin-left:auto;display:flex;align-items:center;font-size:15px;line-height:20px}
  .w{position:relative;margin-right:8px;height:25px}.w b{position:absolute;left:13px;top:0;width:12.500px;height:12.500px;border-radius:50%;background:#c92a1e;font:9.500px/12.500px ${UI};text-align:center}
  .ck{display:flex;flex-direction:column;align-items:center;font-size:12.600px;line-height:19.500px;width:64px;margin:0 19px 0 13px}
  .nt{position:relative;height:17px;margin-right:21px}.nt b{position:absolute;left:9px;top:8px;width:16px;height:16px;border-radius:50%;background:#333;border:1px solid #888;box-sizing:border-box;font:600 11px/14px ${UI};text-align:center}
  .ed{width:1px;align-self:stretch;background:#666;margin-right:4px}`,
  () => `<span class="c" style="width:50px"><ui-icon name="win" w="18"></ui-icon></span><div class="s"><ui-icon name="mag" w="17.500"></ui-icon><fit-text w="66.500">Pesquisar</fit-text><ui-icon class="lem" name="lemur" w="64" h="42"></ui-icon></div><span class="c" style="width:50.500px"><ui-icon name="taskview" w="18" h="17"></ui-icon></span><span style="width:2px;flex:none"></span>
  ${[['explorer',24,22,'run'],['edge',26,26,''],['chrome',26,26,'run active'],['store',24,25,'run'],['mail',26,24,''],['docker',25.500,25.500,'run'],['card',22.500,16,'run'],['penguin',18.500,25,'run'],['snip',21,25,'run multi'],['vscode',26,26,'run']].map(([n,w,h,f])=>`<task-item icon="${n}" w="${w}" h="${h}" ${f}></task-item>`).join('')}
  <div class="tray"><span class="w"><ui-icon name="weather" w="25.500" h="24.500"></ui-icon><b>1</b></span><fit-text w="32">20°C</fit-text><fit-text w="92.500" style="margin:0 26px 0 8px">Pred. nublado</fit-text><ui-icon name="up" w="12.500" h="8"></ui-icon><ui-icon name="battery" w="17" h="12" style="margin-left:10.500px"></ui-icon><ui-icon name="wifi" w="13.500" style="margin-left:11px"></ui-icon><ui-icon name="pen" w="17" style="margin-left:13.500px"></ui-icon>
  <div class="ck"><fit-text w="29">22:31</fit-text><fit-text w="64">27/10/2023</fit-text></div><span class="nt"><ui-icon name="notif" w="17"></ui-icon><b>2</b></span><i class="ed"></i></div>`);

def('app-desktop', `:host{display:flex;flex-direction:column;width:1600px;height:900px;overflow:hidden;background:#fff}
  .view{display:flex;height:745px;flex:none}.page{flex:1;display:flex;flex-direction:column;background:#222;min-width:0}
  .body{display:flex;flex:1;min-height:0}
  nav{width:234px;flex:none;margin-top:-6.500px}
  main{flex:1;background:#fff;padding:9.500px 26.400px 0 26.600px;overflow:hidden;min-width:0}
  .crumb{background:#f5f5f5;border-radius:4px;height:37px;display:flex;align-items:center;padding-left:19.200px;font-size:15px;line-height:20px;color:#999;box-sizing:border-box;padding-bottom:1px}
  alert-panel{margin:21px 0 20.800px}
  .cards{display:grid;grid-template-columns:repeat(3,1fr);gap:31px;margin-bottom:21.600px}`,
  () => `<browser-chrome></browser-chrome><div class="view"><div class="page"><site-header></site-header><div class="body"><nav>
  <side-item icon="dash" iw="14.600" w="71.500">Dashboard</side-item><side-item icon="chart" iw="16.600" style="--g:3.200px" w="86">Contributions</side-item><side-item icon="table" iw="13.500" style="--g:3.400px" w="70.500">Allocations</side-item><side-item icon="table" iw="13.500" style="--g:3.800px" w="48.500">Memos</side-item><side-item icon="user" iw="12" style="--g:3.400px" w="42">Profile</side-item><side-item icon="edit" iw="14.600" style="--g:3.500px" w="131">Learning Resources</side-item><side-item icon="table" iw="13.500" style="--g:3.800px" w="62.500">Research</side-item><side-item icon="power" iw="12.500" style="--g:3.800px" w="45.500">Logout</side-item></nav>
  <main><div class="crumb"><fit-text w="72">Dashboard</fit-text></div>
  <alert-panel><fit-text w="1130">Experts recommend having <b>80%</b> income replacement saved for retirement. You are estimated to have <b>61%</b> income replacement given your current information and contribution</fit-text><br><fit-text w="29">rate.</fit-text><br><fit-text w="744.500">The amount you're contributing to your retirement plan really does matter. Consider changing your contribution rate.</fit-text><fit-text slot="action" w="137">Update Contributions</fit-text></alert-panel>
  <div class="cards"><stat-card icon="dollar" ix="0" value="$89,925.12" vw="259.500" lw="161.500" style="--bg:#dff0d8;--bd:#d6e9c6;--fg:#468847">Total Retirement Savings</stat-card><stat-card icon="check" ix="15" value="$20,600" vw="187" lw="239.500" style="--bg:#fcf8e3;--bd:#f3ead5;--fg:#c09853">Required Retirement Income / Month</stat-card><stat-card icon="tasks" ix="15" value="$15,630" vw="187" lw="245" style="--bg:#f2dede;--bd:#eed3d7;--fg:#b94a48">Estimated Retirement Income / Month</stat-card></div>
  <performance-chart>Portfolio Performance Statistics</performance-chart></main></div></div><scroll-bar></scroll-bar></div><task-bar></task-bar>`);

/* A single line whose tracking is adjusted so that it occupies w pixels. */
customElements.define('fit-text', class extends HTMLElement {
  constructor(){ super(); this.attachShadow({mode:'open'}).innerHTML = '<style>:host{display:inline-block;white-space:nowrap;flex:none}</style><slot></slot>'; }
  connectedCallback(){
    const w = +this.getAttribute('w'); if (!w) return;
    const s = this.querySelector('slot');
    const n = (s ? s.assignedNodes().map(x => x.textContent).join('') : this.textContent).length;
    this.style.letterSpacing = (w - this.getBoundingClientRect().width) / n + 'px';
  }
});
</script>
</body>
</html>
